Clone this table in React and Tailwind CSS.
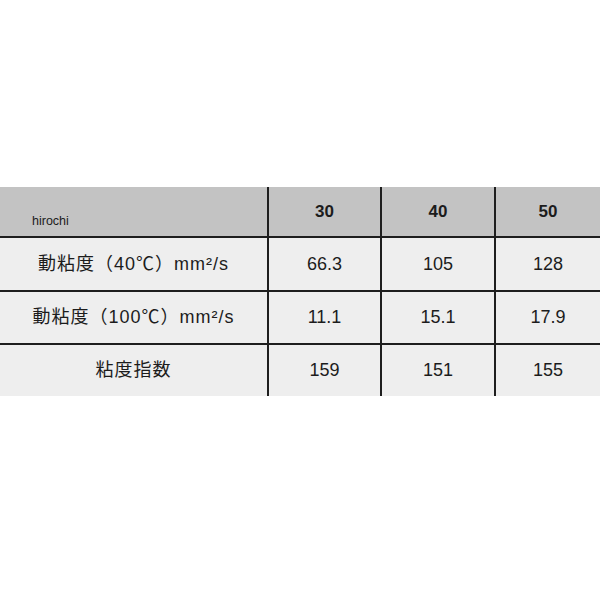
import { Fragment } from 'react';

export default function App() {
  const rows = [
    { label: '動粘度（40℃）mm²/s', values: ['66.3', '105', '128'] },
    { label: '動粘度（100℃）mm²/s', values: ['11.1', '15.1', '17.9'] },
    { label: '粘度指数', values: ['159', '151', '155'] },
  ];

  return (
    <div
      className="w-[600px] h-[600px] bg-white pt-[187px] text-[#1c1c1c]"
      style={{ fontFamily: '"Liberation Sans", "Noto Sans CJK JP", sans-serif' }}
    >
      <div className="grid grid-cols-[267px_111px_112px_104px] grid-rows-[49px_52px_51px_51px] gap-[2px] bg-[#1e1e1e]">
        {/* ヘッダー */}
        <div className="bg-[#c3c3c3] flex items-end pl-[32px] pb-[9px] text-[12.5px] leading-none">
          hirochi
        </div>
        {['30', '40', '50'].map((h) => (
          <div key={h} className="bg-[#c3c3c3] flex items-center justify-center text-[17px] font-bold">
            {h}
          </div>
        ))}

        {/* データ行 */}
        {rows.map((row) => (
          <Fragment key={row.label}>
            <div className="bg-[#eeeeee] flex items-center justify-center text-[18px] tracking-[1px]">
              {row.label}
            </div>
            {row.values.map((v, i) => (
              <div key={i} className="bg-[#eeeeee] flex items-center justify-center text-[18px]">
                {v}
              </div>
            ))}
          </Fragment>
        ))}
      </div>
    </div>
  );
}
